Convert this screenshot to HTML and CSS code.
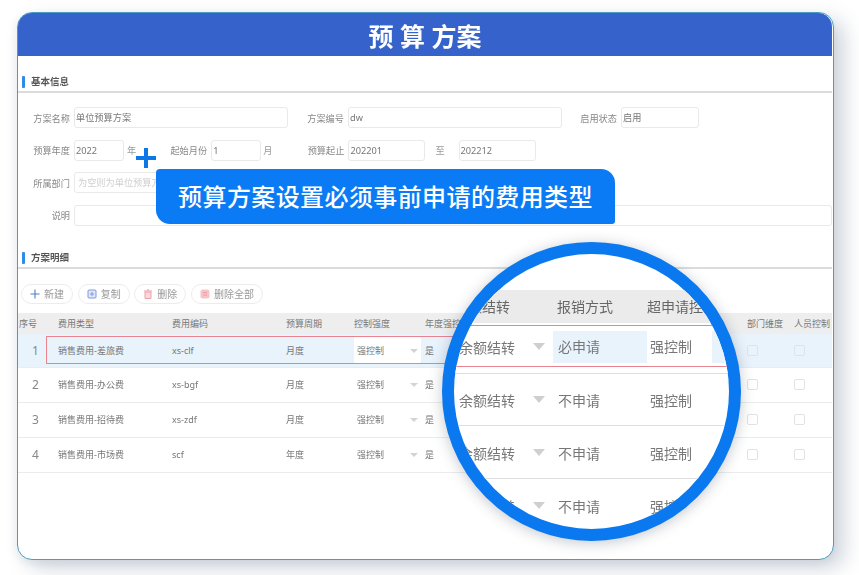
FILE: index.html
```html
<!DOCTYPE html>
<html lang="zh">
<head>
<meta charset="utf-8">
<title>预算方案</title>
<link rel="stylesheet" href="styles.css">
</head>
<body>
<main class="card">
  <header class="title">预 算 方案</header>

  <section class="sec sec-info">
    <h2 class="sec-head">基本信息</h2>
    <div class="form">
      <div class="row">
        <span class="lab">方案名称</span><span class="inp w214">单位预算方案</span>
        <span class="lab l2">方案编号</span><span class="inp w214">dw</span>
        <span class="lab l3">启用状态</span><span class="inp w78">启用</span>
      </div>
      <div class="row">
        <span class="lab">预算年度</span><span class="inp w50">2022</span><span class="unit u1">年</span>
        <span class="lab l4">起始月份</span><span class="inp w50">1</span><span class="unit u2">月</span>
        <span class="lab l5">预算起止</span><span class="inp w77">202201</span><span class="unit u3">至</span><span class="inp w77">202212</span>
      </div>
      <div class="row">
        <span class="lab">所属部门</span><span class="inp w214 ph">为空则为单位预算方案</span>
      </div>
      <div class="row">
        <span class="lab">说明</span><span class="inp wfull"></span>
      </div>
    </div>
  </section>

  <section class="sec sec-detail">
    <h2 class="sec-head">方案明细</h2>
    <div class="tools">
      <span class="btn"><svg class="ico" viewBox="0 0 10 10"><path d="M5 .5v9M.5 5h9" stroke="#4a80c8" stroke-width="1.1" fill="none"/></svg>新建</span>
      <span class="btn"><svg class="ico" viewBox="0 0 10 10"><rect x="1" y="1" width="8" height="8" rx="1" fill="#dfe6f8" stroke="#7f9ae0"/><path d="M3 5h4M5 3v4" stroke="#7f9ae0" fill="none"/></svg>复制</span>
      <span class="btn"><svg class="ico" viewBox="0 0 10 10"><path d="M2 3h6v6.500H2zM1 2h8M4 .8h2" stroke="#eda0a8" fill="#f9d9dc"/></svg>删除</span>
      <span class="btn"><svg class="ico" viewBox="0 0 10 10"><rect x=".5" y=".5" width="9" height="9" rx="2" fill="#f6c4c8"/><path d="M3 3.500h4M3 6h4" stroke="#ee9aa2" fill="none"/></svg>删除全部</span>
    </div>
    <div class="table">
      <div class="tr th">
        <span class="c seq">序号</span><span class="c type">费用类型</span><span class="c code">费用编码</span><span class="c period">预算周期</span><span class="c strength">控制强度</span><span class="c annual">年度强控</span><span class="c dept">部门维度</span><span class="c person">人员控制</span>
      </div>
      <div class="tr first">
        <span class="c seq num">1</span><span class="c type">销售费用-差旅费</span><span class="c code">xs-clf</span><span class="c period">月度</span><span class="c strength"><span class="sel white">强控制<i class="arrow"></i></span></span><span class="c annual">是</span><span class="c dept"><i class="chk"></i></span><span class="c person"><i class="chk"></i></span>
        <i class="redbox"></i>
      </div>
      <div class="tr">
        <span class="c seq num">2</span><span class="c type">销售费用-办公费</span><span class="c code">xs-bgf</span><span class="c period">月度</span><span class="c strength"><span class="sel">强控制<i class="arrow"></i></span></span><span class="c annual">是</span><span class="c dept"><i class="chk"></i></span><span class="c person"><i class="chk"></i></span>
      </div>
      <div class="tr">
        <span class="c seq num">3</span><span class="c type">销售费用-招待费</span><span class="c code">xs-zdf</span><span class="c period">月度</span><span class="c strength"><span class="sel">强控制<i class="arrow"></i></span></span><span class="c annual">是</span><span class="c dept"><i class="chk"></i></span><span class="c person"><i class="chk"></i></span>
      </div>
      <div class="tr">
        <span class="c seq num">4</span><span class="c type">销售费用-市场费</span><span class="c code">scf</span><span class="c period">年度</span><span class="c strength"><span class="sel">强控制<i class="arrow"></i></span></span><span class="c annual">是</span><span class="c dept"><i class="chk"></i></span><span class="c person"><i class="chk"></i></span>
      </div>
    </div>
  </section>

  <svg class="plus" viewBox="0 0 20 20"><path d="M10 0v20M0 10h20" stroke="#0b78e6" stroke-width="4" fill="none"/></svg>
  <div class="banner">预算方案设置必须事前申请的费用类型</div>

  <div class="lens">
    <div class="lens-in">
      <div class="l-head"><span class="la">余额结转</span><span class="lb">报销方式</span><span class="lc">超申请控制</span></div>
      <div class="l-row l-first"><span class="la sel-a">余额结转<i class="larrow"></i></span><span class="lb">必申请</span><span class="lc">强控制</span></div>
      <div class="l-row"><span class="la">余额结转<i class="larrow"></i></span><span class="lb">不申请</span><span class="lc">强控制</span></div>
      <div class="l-row"><span class="la">余额结转<i class="larrow"></i></span><span class="lb">不申请</span><span class="lc">强控制</span></div>
      <div class="l-row"><span class="la">余额结转<i class="larrow"></i></span><span class="lb">不申请</span><span class="lc">强控制</span></div>
    </div>
  </div>
</main>
</body>
</html>
```

FILE: styles.css
```css
* { box-sizing: border-box; }
html, body { margin: 0; background: #fff; }
body {
  width: 859px;
  height: 575px;
  overflow: hidden;
  padding: 12px 0 0 17px;
  font-family: "Noto Sans", "Noto Sans CJK SC", sans-serif;
  color: #777;
}
.card {
  position: relative;
  width: 817px;
  height: 548px;
  background: #fff;
  border: 1px solid #4a9dc0;
  border-radius: 15px;
  padding-right: 1px;
  box-shadow: 10px 8px 20px rgba(70, 90, 120, .26), -2px 3px 8px rgba(70, 90, 120, .08);
  filter: blur(.5px);
}
.title {
  height: 43px;
  background: #3563cb;
  border-radius: 14px 14px 0 0;
  color: #fff;
  font-size: 25px;
  font-weight: 700;
  line-height: 46px;
  text-align: center;
  white-space: pre;
}
.sec-head {
  position: relative;
  margin: 0;
  padding-left: 13px;
  font-size: 9.500px;
  font-weight: 700;
  color: #555;
  height: 18px;
  line-height: 14px;
  border-bottom: 2px solid #dcdcdc;
}
.sec-head::before {
  content: "";
  position: absolute;
  left: 4px;
  top: 1px;
  width: 3px;
  height: 12px;
  background: #2f8ae8;
  border-radius: 1px;
}
.sec-info { padding-top: 19px; }
.form {
  display: flex;
  flex-direction: column;
  gap: 11.670px;
  padding: 14px 0 0;
}
.row { display: flex; align-items: center; height: 21px; font-size: 9.200px; }
.lab { width: 52px; padding-right: 0; text-align: right; flex: none; color: #888; }
.inp {
  flex: none;
  height: 21px;
  margin-left: 4px;
  padding-left: 1px;
  line-height: 19px;
  border: 1px solid #e9e9e9;
  border-radius: 3px;
  color: #777;
}
.w214 { width: 214px; }
.w78 { width: 78px; }
.w77 { width: 77px; }
.w50 { width: 50px; }
.wfull { width: 758px; }
.ph { color: #cfcfcf; padding-left: 3px; }
.l2 { width: 56px; }
.l3 { width: 55px; }
.l4 { width: 37px; }
.l5 { width: 37px; margin-left: 35px; }
.unit { flex: none; color: #999; }
.u1 { margin-left: 3px; margin-right: 34px; }
.u2 { margin-left: 2px; }
.u3 { margin-left: 10px; margin-right: 10px; }
.sec-detail { padding-top: 25px; }
.tools { display: flex; gap: 4.670px; padding: 15px 0 0 3px; }
.btn {
  display: flex;
  align-items: center;
  justify-content: center;
  gap: 4px;
  height: 20px;
  padding: 0 8px;
  border: 1px solid #ececec;
  border-radius: 10px;
  font-size: 10px;
  color: #999;
}
.ico { width: 10px; height: 10px; }
.table { margin-top: 9px; }
.tr {
  position: relative;
  display: grid;
  grid-template-columns: 28px 114px 114px 70px 69px 322px 47px 1fr;
  height: 35px;
  align-items: center;
  font-size: 9px;
  color: #777;
  border-bottom: 1px solid #ececec;
}
.th { height: 21px; background: #eeeeee; border-bottom: 0; color: #777; }
.first { height: 34px; background: #e9f3fc; }
.c { padding-left: 12px; white-space: nowrap; }
.seq { padding-left: 1px; }
.num { padding-left: 14px; font-size: 12px; color: #888; }
.strength { padding-left: 10px; }
.sel {
  position: relative;
  display: block;
  width: 67px;
  height: 27px;
  line-height: 27px;
  padding-left: 3px;
}
.white { background: #fff; border-radius: 2px; }
.arrow {
  position: absolute;
  right: 3px;
  top: 12px;
  border: 4px solid transparent;
  border-top: 4px solid #d4d4d4;
  border-bottom: 0;
}
.chk {
  display: block;
  width: 11px;
  height: 11px;
  border: 1px solid #e2e2e2;
  border-radius: 2px;
}
.redbox {
  position: absolute;
  left: 28px;
  top: 2px;
  width: 450px;
  height: 28px;
  border: 1px solid #e8838f;
}
.plus {
  position: absolute;
  left: 118px;
  top: 135px;
  width: 20px;
  height: 20px;
}
.banner {
  position: absolute;
  left: 138px;
  top: 156px;
  width: 459px;
  height: 55px;
  background: #0a7bf5;
  border-radius: 4px 14px 3px 14px;
  color: #fff;
  font-size: 24px;
  font-weight: 500;
  letter-spacing: .4px;
  line-height: 55px;
  text-align: center;
  white-space: nowrap;
}
.lens {
  position: absolute;
  left: 424px;
  top: 229px;
  width: 299px;
  height: 299px;
  border: 12px solid #0a78ee;
  border-radius: 50%;
  background: #fff;
  overflow: hidden;
  box-shadow: 0 2px 14px rgba(60, 70, 90, .3);
}
.lens-in { padding-top: 36px; width: 275px; font-size: 14px; color: #777; }
.l-head, .l-row { display: grid; grid-template-columns: 99px 94px 82px; white-space: nowrap; }
.l-head { height: 33px; line-height: 33px; background: #ebebeb; color: #666; }
.l-head .la { padding-left: 0; }
.l-head .lb { padding-left: 4px; }
.l-head .lc { padding-left: 0; }
.l-row { height: 53px; padding-top: 2px; align-items: center; border-bottom: 1px solid #dedede; }
.l-row .la { position: relative; padding-left: 5px; }
.l-row .lb { padding-left: 5px; }
.l-row .lc { padding-left: 3px; }
.l-first {
  height: 42px;
  margin-top: 2px;
  padding-top: 1px;
  border-top: 1px solid #e8838f;
  border-bottom: 1px solid #e8838f;
  box-shadow: 0 6px 0 #fff, 0 7px 0 #dedede;
  margin-bottom: 6px;
}
.l-first .lb, .l-first .lc { height: 32px; line-height: 32px; }
.l-first .lb { background: #e9f3fc; }
.l-first .lc { background: linear-gradient(90deg, #fff 65px, #e9f3fc 65px); border-radius: 3px; }
.larrow {
  position: absolute;
  left: 79px;
  top: 6px;
  border: 6px solid transparent;
  border-top: 7px solid #cfcfcf;
  border-bottom: 0;
}
```
